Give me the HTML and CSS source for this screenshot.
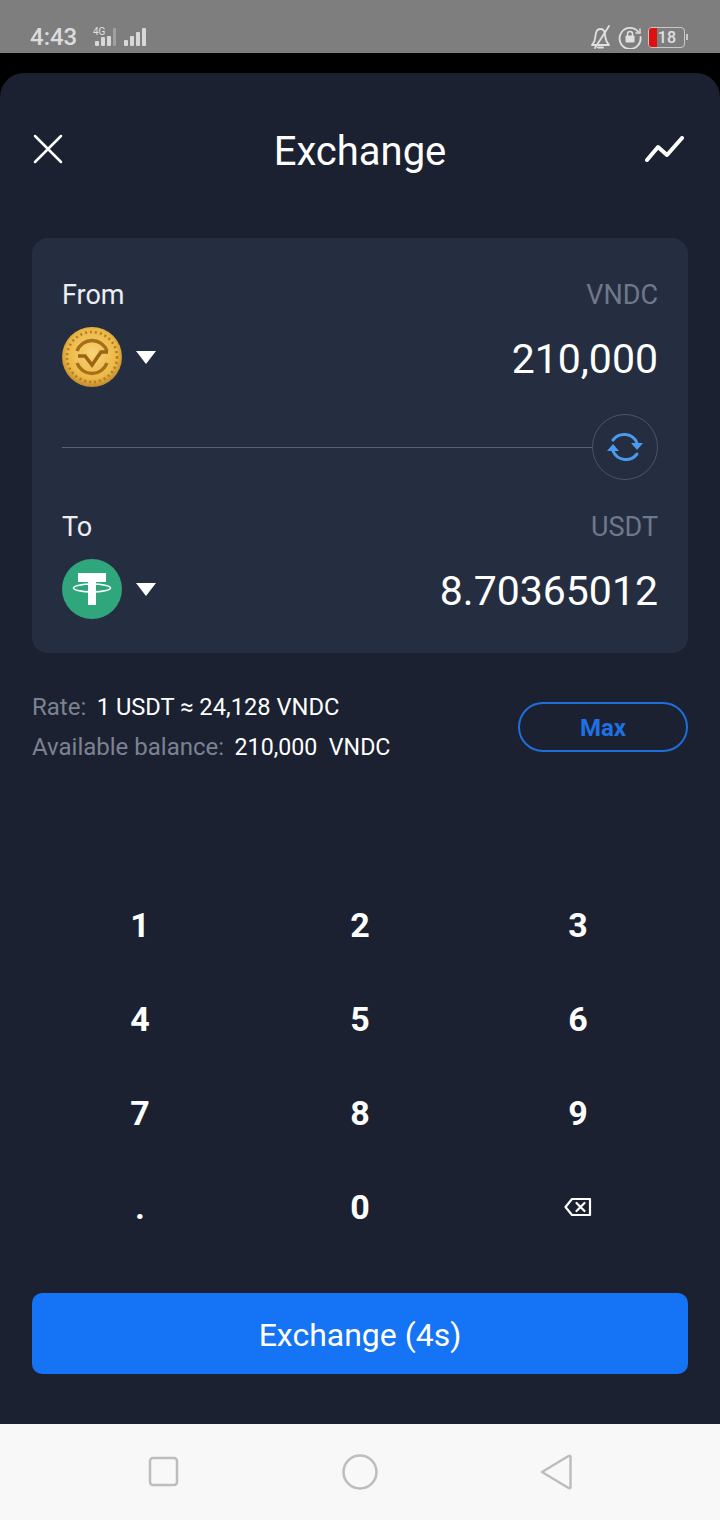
FILE: index.html
```html
<!DOCTYPE html>
<html lang="en">
<head>
    <meta charset="UTF-8">
    <meta name="viewport" content="width=device-width, initial-scale=1.0">
    <title>Exchange</title>
    <link rel="stylesheet" href="styles.css">
</head>
<body>
    <div class="status-bar">
        <div class="status-left">
            <span class="clock">4:43</span>
            <svg class="net" width="24" height="20" viewBox="0 0 24 20">
                <text x="0" y="8" font-size="10" fill="#e0e0e0" font-family="Roboto, sans-serif">4G</text>
                <g fill="#d8d8d8"><rect x="2" y="14" width="4" height="5" rx="1"/><rect x="8" y="10" width="4" height="9" rx="1"/><rect x="14" y="9" width="4" height="10" rx="1"/></g>
                <rect x="20" y="1" width="3" height="18" rx="1" fill="#a0a0a0"/>
            </svg>
            <svg width="22" height="18" viewBox="0 0 22 18"><g fill="#d8d8d8"><rect x="0" y="12" width="4" height="6" rx="1"/><rect x="6" y="8" width="4" height="10" rx="1"/><rect x="12" y="4" width="4" height="14" rx="1"/><rect x="18" y="0" width="4" height="18" rx="1"/></g></svg>
        </div>
        <div class="status-right">
            <svg width="24" height="24" viewBox="0 0 24 24" fill="none" stroke="#e0e0e0" stroke-width="1.800" stroke-linejoin="round" stroke-linecap="round"><path d="M3 20h17c-2-2-3-4-3.500-7l-.8-5c-.4-2.500-2.200-4-4.200-4s-4 1.500-4.500 4l-.9 5C6 16 5 18 3 20z"/><path d="M9 22.500h5"/><path d="M20 1L6 23"/></svg>
            <svg width="24" height="24" viewBox="0 0 24 24" fill="none" stroke="#e0e0e0" stroke-width="1.800" stroke-linecap="round"><path d="M20 6.500A10.500 10.500 0 1 0 22.500 12"/><path d="M22 4v4h-4" stroke-width="1.500"/><rect x="7.500" y="10.500" width="9" height="7" rx="1" fill="#e0e0e0" stroke="none"/><path d="M9.500 10.500V9a2.500 2.500 0 0 1 5 0v1.500" stroke-width="1.500"/></svg>
            <div class="battery">
                <div class="battery-level"></div>
                <span class="battery-text">18</span>
            </div>
            <div class="battery-tip"></div>
        </div>
    </div>

    <div class="backdrop">
        <div class="sheet">
            <header class="top-bar">
                <svg class="close-icon" width="32" height="30" viewBox="0 0 32 30" stroke="#fff" stroke-width="2.500" stroke-linecap="round"><path d="M3 2l26 26M29 2L3 28"/></svg>
                <h1>Exchange</h1>
                <svg class="chart-icon" width="40" height="26" viewBox="0 0 40 26" fill="none" stroke="#fff" stroke-width="4" stroke-linecap="round" stroke-linejoin="round"><path d="M2 24l11-13 9 8L37 2"/></svg>
            </header>

            <section class="card">
                <div class="row-labels">
                    <span>From</span>
                    <span class="coin-name">VNDC</span>
                </div>
                <div class="row-amount">
                    <div class="coin-select">
                        <svg width="60" height="60" viewBox="0 0 60 60">
                            <defs>
                                <radialGradient id="gold" cx="50%" cy="45%" r="55%">
                                    <stop offset="0" stop-color="#f8d477"/>
                                    <stop offset="0.75" stop-color="#ecb846"/>
                                    <stop offset="1" stop-color="#c08a2c"/>
                                </radialGradient>
                            </defs>
                            <circle cx="30" cy="30" r="30" fill="url(#gold)"/>
                            <circle cx="30" cy="30" r="25" fill="none" stroke="#b57c22" stroke-width="2.500" stroke-dasharray="2 3"/>
                            <path d="M45 24A16 16 0 0 0 15 24" fill="none" stroke="#a86f1a" stroke-width="3.500"/>
                            <path d="M15 36a16 16 0 0 0 30 0" fill="none" stroke="#a86f1a" stroke-width="3.500"/>
                            <path d="M16 29h7l7 9 9-13h7" fill="none" stroke="#9c6514" stroke-width="3.500"/>
                        </svg>
                        <div class="caret"></div>
                    </div>
                    <span class="amount">210,000</span>
                </div>
                <div class="divider">
                    <div class="line"></div>
                    <div class="swap">
                        <svg width="40" height="36" viewBox="0 0 40 36" fill="none" stroke="#4a9bf0" stroke-width="3" stroke-linecap="round"><path d="M8 11A14 14 0 0 1 32 14"/><path d="M32 25A14 14 0 0 1 8 22"/><path d="M26 14h12l-6 7zM2 22h12l-6-7z" fill="#4a9bf0" stroke="none"/></svg>
                    </div>
                </div>
                <div class="row-labels">
                    <span>To</span>
                    <span class="coin-name">USDT</span>
                </div>
                <div class="row-amount">
                    <div class="coin-select">
                        <svg width="60" height="60" viewBox="0 0 60 60">
                            <circle cx="30" cy="30" r="30" fill="#2fa67c"/>
                            <path d="M16 14h28v9H34v23h-8V23H16z" fill="#fff"/>
                            <ellipse cx="30" cy="29" rx="18.500" ry="4" fill="none" stroke="#fff" stroke-width="1.500"/>
                        </svg>
                        <div class="caret"></div>
                    </div>
                    <span class="amount">8.70365012</span>
                </div>
            </section>

            <section class="info">
                <div class="info-text">
                    <div><span class="muted">Rate:</span><span class="value">1 USDT ≈ 24,128 VNDC</span></div>
                    <div><span class="muted">Available balance:</span><span class="value balance">210,000&nbsp; VNDC</span></div>
                </div>
                <button class="max-btn">Max</button>
            </section>

            <div class="keypad">
                <div class="key">1</div>
                <div class="key">2</div>
                <div class="key">3</div>
                <div class="key">4</div>
                <div class="key">5</div>
                <div class="key">6</div>
                <div class="key">7</div>
                <div class="key">8</div>
                <div class="key">9</div>
                <div class="key">.</div>
                <div class="key">0</div>
                <div class="key">
                    <svg width="28" height="20" viewBox="0 0 28 20" fill="none" stroke="#fff" stroke-width="2.200" stroke-linecap="round" stroke-linejoin="round"><path d="M8 2h18v16H8L1.500 10z"/><path d="M12.500 6l8 8M20.500 6l-8 8"/></svg>
                </div>
            </div>

            <button class="submit">Exchange (4s)</button>
        </div>
    </div>

    <nav class="nav-bar">
        <svg width="32" height="32" viewBox="0 0 32 32" fill="none" stroke="#bdbdbd" stroke-width="2.500"><rect x="2" y="2" width="27" height="27" rx="3"/></svg>
        <svg width="38" height="38" viewBox="0 0 38 38" fill="none" stroke="#bdbdbd" stroke-width="2.500"><circle cx="19" cy="19" r="16.500"/></svg>
        <svg width="32" height="38" viewBox="0 0 32 38" fill="none" stroke="#bdbdbd" stroke-width="2.500" stroke-linejoin="round"><path d="M2 19L28.500 3q2-1 2 1v30q0 2-2 1z"/></svg>
    </nav>
</body>
</html>
```

FILE: styles.css
```css
* {
    box-sizing: border-box;
}

body {
    margin: 0;
    width: 720px;
    height: 1520px;
    overflow: hidden;
    font-family: Roboto, "Liberation Sans", sans-serif;
    background-color: #000;
    color: #fff;
    display: flex;
    flex-direction: column;
}

.status-bar {
    height: 53px;
    background-color: #7e7e7e;
    display: flex;
    justify-content: space-between;
    align-items: center;
    padding: 25px 32px 4px 30px;
}

.status-left,
.status-right {
    display: flex;
    align-items: center;
}

.clock {
    font-size: 24px;
    font-weight: 500;
    color: #dcdcdc;
    margin-right: 16px;
}

.net {
    margin-right: 7px;
}

.status-right {
    gap: 5px;
}

.battery {
    position: relative;
    width: 37px;
    height: 21px;
    margin-left: 1px;
    border: 1px solid #c8c8c8;
    border-radius: 4px;
    display: flex;
    align-items: center;
    justify-content: flex-end;
    padding-right: 8px;
}

.battery-level {
    position: absolute;
    left: 0;
    top: 0;
    width: 8px;
    height: 19px;
    background-color: #e01010;
    border-radius: 3px 0 0 3px;
}

.battery-text {
    font-size: 16px;
    font-weight: 500;
    color: #e0e0e0;
}

.battery-tip {
    width: 2px;
    height: 6px;
    margin-left: -4px;
    background-color: #c8c8c8;
}

.backdrop {
    height: 1371px;
    padding-top: 20px;
    background-color: #000;
}

.sheet {
    height: 1351px;
    background-color: #1b2130;
    border-radius: 24px 24px 0 0;
    padding: 0 32px;
}

.top-bar {
    height: 165px;
    display: grid;
    grid-template-columns: 1fr auto 1fr;
    align-items: center;
    padding-bottom: 13px;
}

.top-bar h1 {
    margin: 0;
    padding-top: 5px;
    font-size: 40px;
    font-weight: 400;
}

.chart-icon {
    justify-self: end;
    margin-right: 3px;
}

.card {
    height: 415px;
    background-color: #252e40;
    border-radius: 16px;
    padding: 39px 30px 0;
}

.row-labels {
    display: flex;
    justify-content: space-between;
    font-size: 27px;
    line-height: 36px;
    color: #eceef2;
}

.coin-name {
    color: #6f7889;
}

.row-amount {
    display: flex;
    justify-content: space-between;
    align-items: center;
    height: 60px;
    margin-top: 14px;
}

.coin-select {
    display: flex;
    align-items: center;
    gap: 14px;
}

.caret {
    width: 0;
    height: 0;
    border-left: 10px solid transparent;
    border-right: 10px solid transparent;
    border-top: 13px solid #fff;
}

.amount {
    padding-top: 4px;
    font-size: 41px;
}

.divider {
    display: flex;
    align-items: center;
    height: 66px;
    margin: 27px 0 29px;
}

.line {
    flex: 1;
    height: 1px;
    background-color: #596272;
}

.swap {
    width: 66px;
    height: 66px;
    border: 1px solid #4a5568;
    border-radius: 50%;
    display: flex;
    align-items: center;
    justify-content: center;
}

.info {
    display: flex;
    justify-content: space-between;
    align-items: center;
    margin-top: 34px;
    font-size: 24px;
    line-height: 40px;
}

.muted {
    color: #7b8392;
    margin-right: 10.5px;
}

.value {
    font-size: 23.7px;
}

.value.balance {
    font-size: 23.2px;
}

.max-btn {
    width: 170px;
    height: 50px;
    padding-top: 3px;
    background: none;
    border: 2px solid #1e6fdc;
    border-radius: 25px;
    color: #1f6fe5;
    font-family: inherit;
    font-size: 24px;
    font-weight: 700;
}

.keypad {
    display: grid;
    grid-template-columns: 216px 224px 212px;
    grid-auto-rows: 94px;
    padding-top: 111px;
    height: 487px;
}

.key {
    display: flex;
    align-items: center;
    justify-content: center;
    font-size: 34px;
    font-weight: 700;
}

.submit {
    display: block;
    width: 100%;
    height: 81px;
    margin-top: 39px;
    padding-top: 3px;
    background-color: #1573f6;
    border: none;
    border-radius: 10px;
    color: #fff;
    font-family: inherit;
    font-size: 32px;
}

.nav-bar {
    height: 96px;
    background-color: #f8f8f8;
    display: flex;
    justify-content: space-between;
    align-items: center;
    padding: 0 148px;
}
```
